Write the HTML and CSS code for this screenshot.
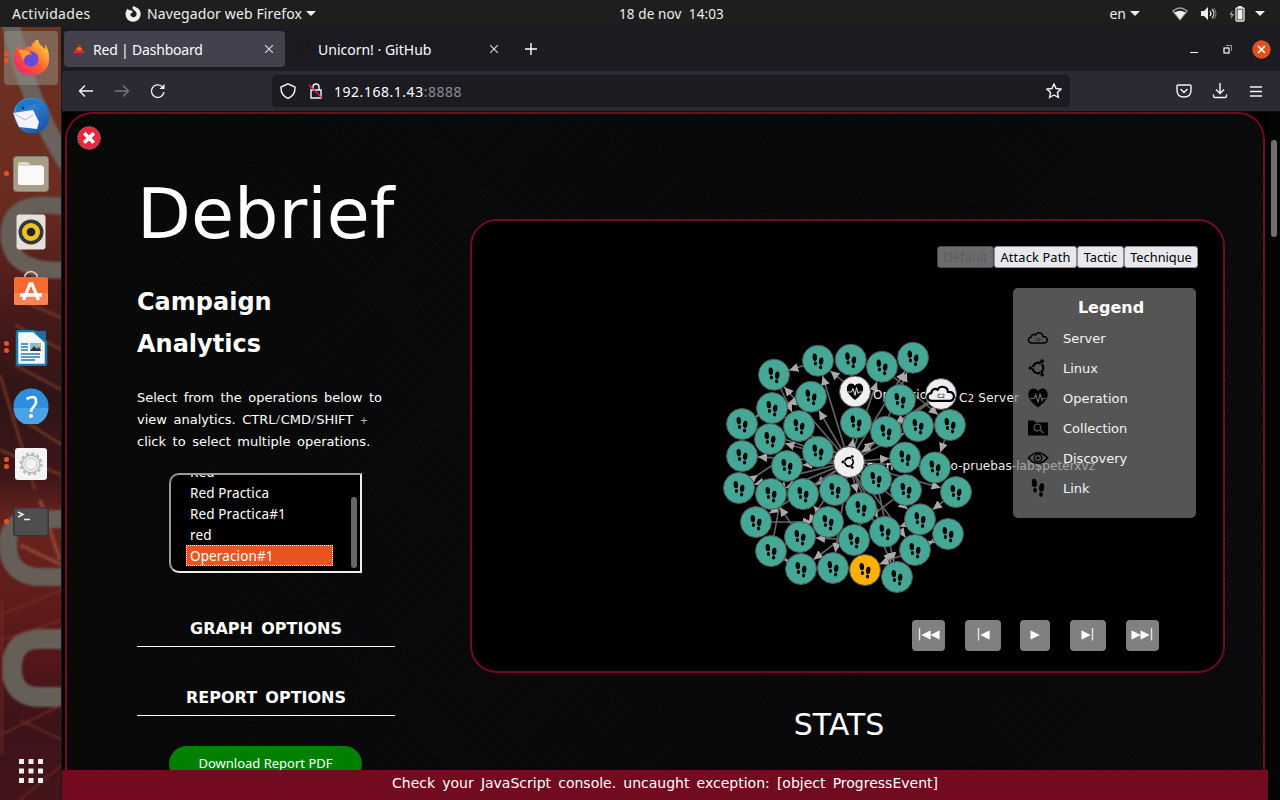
FILE: index.html
```html
<!DOCTYPE html>
<html lang="es">
<head>
<meta charset="utf-8">
<title>Red | Dashboard</title>
<link rel="stylesheet" href="styles.css">
</head>
<body>
<svg class="defs" aria-hidden="true">
  <defs>
    <g id="feet">
      <ellipse cx="-3.2" cy="-3.4" rx="2.2" ry="3.7" transform="rotate(-5 -3.2 -3.4)"/>
      <ellipse cx="-2.6" cy="2.9" rx="1.6" ry="2"/>
      <ellipse cx="3.2" cy="0.4" rx="2.2" ry="3.7" transform="rotate(8 3.2 .4)"/>
      <ellipse cx="2.6" cy="6.6" rx="1.6" ry="2"/>
    </g>
    <g id="linux">
      <circle r="4.400" fill="none" stroke="#000" stroke-width="1.900" stroke-dasharray="8.215 1" stroke-dashoffset="-.5" transform="rotate(60)"/>
      <circle cx="-6.400" cy="0" r="1.500"/><circle cx="3.400" cy="-5.700" r="1.500"/><circle cx="3.400" cy="5.700" r="1.500"/>
    </g>
    <g id="heart">
      <path d="M0 8.600C-4 5-8.200 1.400-8.200-3c0-5.600 6-6.700 8.200-2.800C2.200-9.700 8.200-8.600 8.200-3 8.200 1.400 4 5 0 8.600z"/>
      <path class="pulse" d="M-7 .5h3.500l1.500-3.500 2 7 1.500-8 1.700 6 1-1.500h3"/>
    </g>
    <g id="cloud">
      <path d="M-8 6C-12.500 6-13-.500-8.500-.800-8-5-4-4.800-3-3.800-.500-8 6-6.500 6-1.800c7-.300 6.500 7.800 1.500 7.800z" fill="none" stroke="#000" stroke-width="1.900"/>
      <text y="3.500" class="cloud-text">C2</text>
    </g>
    <g id="node"><circle r="15.500" class="teal"/><use href="#feet"/></g>
    <marker id="arrow" markerUnits="userSpaceOnUse" markerWidth="10" markerHeight="10" refX="25" refY="4.500" orient="auto"><path d="M0 0 9 4.500 0 9z" fill="#aaa"/></marker>
    <linearGradient id="fox" x1="0" y1="1" x2="1" y2="0"><stop stop-color="#e8157c"/><stop offset=".5" stop-color="#ff6030"/><stop offset="1" stop-color="#fff044"/></linearGradient>
    <linearGradient id="bird" x1="0" y1="0" x2="1" y2="1"><stop stop-color="#39a5e8"/><stop offset="1" stop-color="#1747a5"/></linearGradient>
    <linearGradient id="wall" x1="0" y1="0" x2="0" y2="1"><stop stop-color="#6b3322"/><stop offset=".22" stop-color="#6b2c20"/><stop offset=".36" stop-color="#4a1a1a"/><stop offset=".48" stop-color="#2f1517"/><stop offset=".58" stop-color="#3e1619"/><stop offset=".64" stop-color="#6a241c"/><stop offset=".8" stop-color="#591719"/><stop offset=".9" stop-color="#3c1319"/><stop offset="1" stop-color="#44141a"/></linearGradient>
    <filter id="soft"><feGaussianBlur stdDeviation="1"/></filter>
  </defs>
</svg>

<header class="topbar">
  <span class="activities">Actividades</span>
  <svg class="app-icon" viewBox="0 0 16 16"><path d="M8 0c3 1 8 3 7.700 8.300A7.600 7.600 0 0 1 .5 8C.4 5.500 1.500 4 2.800 2.400c.3 1.200 1 1.600 2.400 1.900C7 4 8 5 7.500 6.500 6 7 5 8 5.500 9.500A3.300 3.300 0 1 0 10 5C8.500 3.500 6.800 2.600 8 0z" fill="#eee"/></svg>
  <span class="app-name">Navegador web Firefox</span><i class="caret"></i>
  <span class="clock">18 de nov&nbsp; 14:03</span>
  <div class="status">
    <span>en</span><i class="caret lang"></i>
    <svg class="wifi" viewBox="0 0 16 14"><path d="M1 4Q8-2 15 4L8 12.500z" fill="none" stroke="#999" stroke-width="1.500"/><path d="M2.500 5.500Q8 2 13.500 5.500L8 12.500z" fill="#eee"/></svg>
    <svg class="volume" viewBox="0 0 16 14"><path d="M0 4h3l4-4v13L3 9H0z" fill="#eee"/><path d="M9 4q2 2.500 0 5M11 2q4 4.500 0 9" fill="none" stroke="#ddd" stroke-width="1.200"/><path d="M13 1q4 5.500 0 11" fill="none" stroke="#888"/></svg>
    <svg class="battery" viewBox="0 0 16 16"><path d="M3.500 4 .5 9h2L1.500 13l4-5H3z" fill="#999"/><rect x="7" y="2" width="8" height="13" rx="1" fill="none" stroke="#eee" stroke-width="1.300"/><path d="M9 0h4v2H9zM8.500 3.500h5v10h-5z" fill="#eee"/></svg>
    <i class="caret"></i>
  </div>
</header>

<div class="workspace">
  <nav class="dock">
    <svg class="wallpaper" viewBox="0 27 62 773" preserveAspectRatio="none">
      <rect y="27" width="62" height="773" fill="url(#wall)"/>
      <g filter="url(#soft)">
        <path d="M10 20Q26 100 70 168" fill="none" stroke="#6b625b" stroke-width="18"/>
        <path d="M66 207Q9 197 9 235T66 270" fill="none" stroke="#655f58" stroke-width="17"/>
        <path d="M0 375 35 490M20 300 62 318M15 325 62 350M15 365 62 390M15 415 62 445M0 450 62 475" stroke="#77382a" stroke-opacity=".75" stroke-width="3" fill="none"/>
        <path d="M40 500 60 560M20 545 62 565" stroke="#8a4030" stroke-width="4"/>
        <path d="M66 519H38Q8 517 8 545T36 577H66" fill="none" stroke="#655f58" stroke-width="18"/>
        <path d="M66 639H40Q12 639 12 668T40 697H66" fill="none" stroke="#655f58" stroke-width="20"/>
        <path d="M0 615 62 590M0 640 62 620M0 735 62 705M20 720 62 740M20 800 62 765M2 600V755" stroke="#782d27" stroke-opacity=".7" stroke-width="2" fill="none"/>
      </g>
    </svg>
    <div class="app active"><i class="dots two"></i><svg viewBox="-18 -18 36 36"><path d="M-17-3C-16-8-14-11-12-12-11-9-9-8-6-9-4-12-2-12 0-11 1-15 4-17 7-19 7-14 12-11 14-9 15-11 14-12 14-14 22-1 19 17 1 17.500-11 18-19 8-17-3z" fill="url(#fox)"/><circle cx="0" cy="1" r="7.500" fill="#6b48d6"/><path d="M-13-8Q-2-9 1-3-5-5-8 3-9-2-13-8z" fill="#ff982e"/></svg></div>
    <div class="app"><svg viewBox="-18 -18 36 36"><path d="M-17-2C-18-12-8-19 1-18 13-18 20-8 18.500 1 18 10 11 18 2 17.500-8 18-16 10-17-2z" fill="url(#bird)"/><path d="M-14-12Q-2-21 11-13 1-14-5-7L-15-4z" fill="#2277c8"/><circle cx="-8" cy="-8" r="1.200" fill="#222"/><path d="M-18-3 2-6 8 6 6 13-12 11z" fill="#f5f5f9"/><path d="m-18-3 12 7L2-1" fill="none" stroke="#aeb8c8"/></svg></div>
    <div class="app"><i class="dots"></i><svg viewBox="0 0 36 36"><rect x=".5" y=".5" width="35" height="35" rx="3" fill="#a69e89" stroke="#827d70"/><path d="M5 8q0-2 2-2h8l2 3h12v6H5z" fill="#dcd8ce"/><rect x="5" y="10" width="26" height="19" rx="2" fill="#faf9f7"/></svg></div>
    <div class="app"><svg viewBox="0 0 36 36"><rect x="3.500" y=".5" width="29" height="35" rx="3" fill="#e5e0d9"/><circle cx="18" cy="18" r="12.500" fill="#33353f"/><circle cx="18" cy="18" r="9" fill="#eec31c"/><circle cx="18" cy="18" r="4.300" fill="#202026"/></svg></div>
    <div class="app"><svg class="store" viewBox="0 2 36 36"><path d="M12 9V5q6-7 12 0v4" fill="none" stroke="#e4cfaa" stroke-width="1.500"/><rect x="1" y="7" width="34" height="28" rx="2" fill="#f36b31"/><path d="M1 23h34v10q0 2-2 2H3q-2 0-2-2z" fill="#fa8354"/><path d="m10.500 30 6.500-16h2l6.500 16M7 25h22" fill="none" stroke="#fff" stroke-width="3.300"/></svg></div>
    <div class="app"><i class="dots two"></i><svg viewBox="0 0 36 36"><path d="M6 1h15l12 11v21q0 2-2 2H6q-2 0-2-2V3q0-2 2-2z" fill="#f7f7f7" stroke="#1679ab" stroke-width="2.500"/><path d="M22 1h11v10z" fill="#1b70a0"/><path d="M8 14h7M8 17h7M8 20h7M8 24h19M8 27h19M8 30h14" stroke="#257ca9" stroke-width="1.500"/><path d="M17 13h11v8H17z" fill="#83bce2"/><path d="m17 21 4-5 3 3 2-2 2 4z" fill="#333"/><circle cx="26" cy="15" r="1.300" fill="#edbd26"/></svg></div>
    <div class="app"><svg viewBox="0 0 36 36"><circle cx="18" cy="18" r="17.500" fill="#2d8fdd"/><path d="M.5 20h35a17.500 17.500 0 0 1-35 0z" fill="#4ba2e5"/><path d="M13.500 11q10-5 9.500 3c0 5-5 4.500-5 10" fill="none" stroke="#fff" stroke-width="2.600"/><circle cx="18" cy="28" r="2" fill="#fff"/></svg></div>
    <div class="app"><i class="dots two"></i><svg viewBox="0 0 36 36"><rect x="2" y="2" width="32" height="32" rx="3" fill="#f3f3f3"/><circle cx="18" cy="18" r="10.500" fill="none" stroke="#b6b6b6" stroke-width="2" stroke-dasharray="3 2.500"/><circle cx="18" cy="18" r="8.800" fill="none" stroke="#b6b6b6" stroke-width="1.400"/><circle cx="18" cy="18" r="6" fill="none" stroke="#c0c0c0"/></svg></div>
    <div class="app"><i class="dots"></i><svg viewBox="0 0 36 36"><rect x=".8" y="3.800" width="34.400" height="28" rx="2.500" fill="#4e4e4e" stroke="#373737" stroke-width="1.600"/><path d="m5 8 5 2.500L5 13M11 15.500h6" fill="none" stroke="#eee" stroke-width="1.500"/></svg></div>
    <svg class="launcher" viewBox="0 0 24 24"><path d="M0 2.500h24M0 12h24M0 21.500h24" stroke="#eee" stroke-width="5" stroke-dasharray="5 4.500"/></svg>
  </nav>

  <main class="browser">
    <div class="tabs">
      <div class="tab selected"><svg class="favicon" viewBox="0 0 14 14"><path d="M1 12 5.500 6h3L13 12z" fill="#d63217"/><path d="m5 8 1-2.500h2L10 8 8 10 6.500 9 5 10z" fill="#e6751a"/><path d="M4 4q3-3 6 0L8 6H6z" fill="#69451d"/></svg><span class="tab-red">Red | Dashboard</span><svg class="close" viewBox="0 0 8 8"><path d="m0 0 8 8M8 0 0 8"/></svg></div>
      <div class="tab"><svg class="favicon" viewBox="0 0 14 14"><path d="M2 4V2h3M9 2h3v4M2 8v2h3M9 10h2" fill="none" stroke="#111114" stroke-width="1"/></svg><span class="tab-uni">Unicorn! · GitHub</span><svg class="close" viewBox="0 0 8 8"><path d="m0 0 8 8M8 0 0 8"/></svg></div>
      <svg class="plus" viewBox="0 0 12 12"><path d="M6 0v12M0 6h12" stroke="#fff" stroke-width="1.400"/></svg>
      <div class="window-buttons">
        <svg width="8" height="8"><path d="M0 7.500h8" stroke="#fff"/></svg>
        <svg width="9" height="9"><path d="M3 .5h5.500V6" fill="none" stroke="#999"/><rect x="1" y="3" width="5" height="5" fill="none" stroke="#fff" stroke-width="1.200"/></svg>
        <svg width="19" height="19"><circle cx="9.500" cy="9.500" r="9.200" fill="#e2501b"/><path d="m6 6 7 7m0-7-7 7" stroke="#fff" stroke-width="1.600"/></svg>
      </div>
    </div>

    <div class="toolbar">
      <svg class="back" viewBox="0 0 16 14"><path d="M15 7H1.500m5.500-5.500L1.500 7 7 12.500"/></svg>
      <svg class="forward" viewBox="0 0 16 14"><path d="M1 7h13.500M9 1.500 14.500 7 9 12.500"/></svg>
      <svg class="reload" viewBox="0 0 16 16"><path d="M14 9a6.300 6.300 0 1 1-2-5.500"/><path d="M14.500 1v5h-5z" class="solid"/></svg>
      <div class="address">
        <svg class="shield" viewBox="0 0 16 16"><path d="M8 .8 15 4Q15.500 12 8 15.500.5 12 1 4z"/></svg>
        <svg class="lock" viewBox="0 0 16 16"><path d="M3 7h10v8H3zM5 7V4Q5 1 8 1t3 3v3"/><path d="m1 2 13 13" class="slash"/></svg>
        <span class="host">192.168.1.43<em>:8888</em></span>
        <svg class="star" viewBox="0 0 16 16"><path d="m8 1 2.100 4.500 5 .600-3.700 3.400 1 5L8 12l-4.400 2.500 1-5L.9 6.100l5-.6z"/></svg>
      </div>
      <svg class="pocket" viewBox="0 0 16 14"><path d="M2 1h12q1 0 1 1v4Q15 13 8 13T1 6V2q0-1 1-1zM4.500 5 8 8.500 11.500 5"/></svg>
      <svg class="download" viewBox="0 0 16 16"><path d="M8 0v10M4 6.500l4 4 4-4M1.500 11.500V13q0 1.500 1.500 1.500h10q1.500 0 1.500-1.500v-1.500"/></svg>
      <svg class="menu" viewBox="0 0 12 11"><path d="M0 1h12M0 5.500h12M0 10h12"/></svg>
    </div>

    <div class="viewport">
      <div class="page">
        <section class="debrief">
          <svg class="close-badge" viewBox="0 0 24 24"><circle cx="12" cy="12" r="11.300" fill="#e8273f" stroke="#ad8e92" stroke-width=".8" stroke-dasharray="2 1"/><path d="m7.200 7.200 9.600 9.600m0-9.600-9.600 9.600" stroke="#fff" stroke-width="3.600"/></svg>
          <div class="sidebar">
            <h1>Debrief</h1>
            <h2>Campaign<br>Analytics</h2>
            <p>Select from the operations below to<br>view analytics. CTRL<b>/</b>CMD<b>/</b>SHIFT <small>+</small><br>click to select multiple operations.</p>
            <div class="select">
              <div class="options"><div>Red</div><div>Red Practica</div><div>Red Practica#1</div><div>red</div><div class="chosen">Operacion#1</div></div>
              <div class="thumb"></div>
            </div>
            <h3>GRAPH OPTIONS</h3>
            <h3 class="report">REPORT OPTIONS</h3>
            <button class="pdf">Download Report PDF</button>
          </div>
          <div class="results">
            <div class="graph">
              <svg class="network" viewBox="472 221 751 450">
                <g class="links">
                  <path d="M818 361 774 375"/><path d="M849 462 774 375"/><path d="M849 462 772 408"/><path d="M849 462 811 397"/><path d="M849 462 818 361"/><path d="M855 391 818 361"/>
                  <path d="M849 462 882 367"/><path d="M849 462 913 358"/><path d="M882 367 850 360"/><path d="M855 391 850 360"/><path d="M882 432 913 358"/><path d="M849 462 886 432"/><path d="M849 462 856 423"/>
                  <path d="M941 394 849 462"/><path d="M882 367 950 425"/><path d="M941 394 882 432"/><path d="M950 425 935 467"/><path d="M849 462 918 426"/><path d="M849 462 905 457"/>
                  <path d="M849 462 742 456"/><path d="M849 462 742 424"/><path d="M849 462 770 439"/><path d="M772 408 742 424"/><path d="M774 375 799 426"/><path d="M811 397 772 408"/>
                  <path d="M849 462 771 494"/><path d="M849 462 787 466"/><path d="M849 462 803 494"/><path d="M849 462 739 488"/><path d="M849 462 956 492"/><path d="M849 462 935 467"/>
                  <path d="M956 492 920 519"/><path d="M849 462 920 519"/><path d="M849 462 861 508"/><path d="M849 462 800 537"/><path d="M849 462 756 522"/><path d="M756 522 828 522"/>
                  <path d="M771 551 787 466"/><path d="M906 490 801 569"/><path d="M849 462 833 568"/><path d="M876 479 897 577"/><path d="M849 462 897 577"/><path d="M849 462 915 550"/>
                  <path d="M800 537 771 494"/><path d="M854 540 800 537"/><path d="M948 534 915 550"/><path d="M915 550 865 570"/><path d="M771 551 801 569"/><path d="M801 569 771 551"/>
                  <path d="M771 551 800 537"/><path d="M920 519 885 532"/><path d="M915 550 948 534"/><path d="M906 490 876 479"/><path d="M739 488 771 466"/><path d="M828 522 803 494"/><path d="M849 462 885 532"/>
                </g>
                <g transform="translate(855 391.500)"><circle r="15.500" class="white"/><use href="#heart"/></g>
                <text x="873" y="399">Operacion#1</text>
                <g transform="translate(941 394)"><circle r="15.500" class="white"/><use href="#cloud" transform="scale(1.150)"/></g>
                <g transform="translate(849 462)"><circle r="15.500" class="white"/><use href="#linux" transform="scale(.95)"/></g>
                <text x="959" y="402" textLength="60">C<tspan font-size="10">2</tspan> Server</text>
                <text x="867" y="470">s</text><text x="886" y="470">m</text>
                <text x="950.500" y="470" textLength="144.500">o-pruebas-lab$peterxvz</text>
                <use href="#node" x="774" y="374.700"/><use href="#node" x="818" y="360.700"/><use href="#node" x="850.700" y="359.700"/><use href="#node" x="882" y="366.700"/><use href="#node" x="913" y="357.700"/>
                <use href="#node" x="811" y="396.700"/><use href="#node" x="772" y="408"/><use href="#node" x="900" y="400"/><use href="#node" x="742" y="424"/><use href="#node" x="799" y="426"/>
                <use href="#node" x="856" y="422.700"/><use href="#node" x="886" y="431.700"/><use href="#node" x="918" y="426"/><use href="#node" x="950" y="425"/><use href="#node" x="770" y="439"/>
                <use href="#node" x="742" y="456"/><use href="#node" x="818" y="451.700"/><use href="#node" x="905" y="457.500"/><use href="#node" x="787" y="466"/><use href="#node" x="935" y="467.500"/>
                <use href="#node" x="876" y="479"/><use href="#node" x="739" y="488"/><use href="#node" x="771" y="494"/><use href="#node" x="803" y="494"/><use href="#node" x="835" y="490"/>
                <use href="#node" x="906" y="490"/><use href="#node" x="956" y="492"/><use href="#node" x="861" y="508"/><use href="#node" x="756" y="522"/><use href="#node" x="828" y="522"/>
                <use href="#node" x="920" y="519.300"/><use href="#node" x="948" y="534"/><use href="#node" x="800" y="537"/><use href="#node" x="885" y="531.700"/><use href="#node" x="854" y="540"/>
                <use href="#node" x="771" y="551"/><use href="#node" x="915" y="550"/><use href="#node" x="801" y="569"/><use href="#node" x="833" y="568"/><use href="#node" x="897" y="577"/>
                <g transform="translate(865 570)"><circle r="15.500" class="amber"/><use href="#feet"/></g>
              </svg>
              <div class="modes"><button class="m1" disabled>Default</button><button class="m2">Attack Path</button><button class="m3">Tactic</button><button class="m4">Technique</button></div>
              <div class="legend">
                <h4>Legend</h4>
                <div class="row"><svg viewBox="-14 -12 28 24"><g transform="scale(.82)"><use href="#cloud"/></g></svg>Server</div>
                <div class="row"><svg viewBox="-14 -12 28 24"><use href="#linux" transform="scale(1.200)"/></svg>Linux</div>
                <div class="row heart-row"><svg viewBox="-14 -12 28 24"><path d="M0 9.500C-5 5.500-9.700 1.500-9.700-3.500c0-6.500 7-8 9.700-3.300C2.700-11.500 9.700-10 9.700-3.500 9.700 1.500 5 5.500 0 9.500z"/><path class="faint" d="M-8 .5h4l1.800-4 2.400 8L2-4.500l2 7L5.200.5H8"/></svg>Operation</div>
                <div class="row"><svg viewBox="-14 -12 28 24"><path d="M-10-7.500h6l2 2h12v13h-20z"/><circle cx="-.5" cy="-.5" r="3.300" fill="none" stroke="#555" stroke-width="1.300"/><path d="m2 2 3.500 3" stroke="#555" stroke-width="1.500"/></svg>Collection</div>
                <div class="row"><svg viewBox="-14 -12 28 24"><path d="M-9.500 0Q0-10.500 9.500 0 0 10.500-9.500 0z" fill="none" stroke="#000" stroke-width="1.600"/><circle r="3.700" fill="none" stroke="#000" stroke-width="1.400"/><circle r="1.600"/></svg>Discovery</div>
                <div class="row"><svg viewBox="-14 -12 28 24"><use href="#feet" transform="translate(0 -1) scale(1.150)"/></svg>Link</div>
              </div>
              <div class="playback"><button class="wide3">|◀◀</button><button class="wide2">|◀</button><button class="wide1">▶</button><button class="wide2">▶|</button><button class="wide3">▶▶|</button></div>
            </div>
            <h2 class="stats">STATS</h2>
          </div>
        </section>
        <footer class="error">Check your JavaScript console. uncaught exception: [object ProgressEvent]</footer>
      </div>
      <div class="scrollbar"><div class="scroll-thumb"></div></div>
    </div>
  </main>
</div>
</body>
</html>
```

FILE: styles.css
```css
* { box-sizing: border-box; }
body { margin: 0; width: 1280px; height: 800px; overflow: hidden; display: flex; flex-direction: column; background: #000; color: #fff; font-family: "Noto Sans", sans-serif; font-size: 14px; }
h1, h2, h3, h4, p { margin: 0; }
button { font-family: "Noto Sans", sans-serif; padding: 0; margin: 0; white-space: nowrap; }
svg { display: block; flex: none; }
.defs { position: absolute; width: 0; height: 0; }

.topbar { height: 27px; flex: none; display: flex; align-items: center; position: relative; background: #1e1e1e; padding-left: 12px; color: #eee; white-space: nowrap; }
.activities { width: 113px; letter-spacing: .35px; }
.app-icon { width: 16px; height: 16px; }
.app-name { margin-left: 6px; width: 155px; letter-spacing: .13px; }
.caret { margin-left: 4px; border: 5px solid transparent; border-top-color: #eee; border-bottom: 0; }
.clock { margin-left: 303px; font-size: 13.5px; letter-spacing: .12px; width: 108px; }
.status { margin-left: auto; display: flex; align-items: center; padding-right: 15px; }
.status span { padding-left: 1px; }
.lang { margin-right: 32px; }
.wifi { width: 16px; height: 14px; margin-right: 13px; }
.volume { width: 16px; height: 14px; margin-right: 12px; }
.battery { width: 16px; height: 16px; margin-right: 6px; }

.workspace { flex: 1; min-height: 0; display: flex; }
.dock { width: 62px; position: relative; display: flex; flex-direction: column; gap: 4px; padding: 4px 4px 17px; border-right: 1px solid #181818; overflow: hidden; }
.wallpaper { position: absolute; left: 0; top: 0; width: 62px; height: 773px; }
.app { position: relative; width: 54px; height: 54px; display: flex; align-items: center; justify-content: center; }
.app svg { width: 36px; height: 36px; }
.app .store { overflow: visible; }
.active { background: rgba(150,150,140,.5); border-radius: 4px; }
.dots { position: absolute; left: 0; top: 24px; width: 5px; height: 5px; border-radius: 50%; background: #e95420; }
.two { top: 20px; box-shadow: 0 7px 0 #e95420; }
.launcher { position: relative; width: 24px; height: 24px; margin: auto 0 0 15px; }

.browser { width: 1218px; display: flex; flex-direction: column; min-height: 0; }
.tabs { height: 44px; flex: none; background: #1c1b22; display: flex; align-items: center; padding: 0 9px 0 2px; }
.tab { width: 221px; height: 36px; border-radius: 4px; display: flex; align-items: center; padding: 0 12px 0 8px; margin-right: 4px; color: #fbfbfe; }
.selected { background: #42414d; }
.favicon { width: 14px; height: 14px; margin-right: 7px; }
.tab-red { letter-spacing: -.2px; }
.tab-uni { letter-spacing: 0; }
.tab .favicon { position: relative; top: -1px; }
.close { width: 8px; height: 8px; margin-left: auto; stroke: #ddd; stroke-width: 1.1; }
.plus { width: 12px; height: 12px; margin-left: 11px; }
.window-buttons { margin-left: auto; display: flex; gap: 25px; align-items: center; }
.window-buttons svg:last-child { margin-left: -5px; }

.toolbar { height: 40px; flex: none; background: #2b2a33; display: flex; align-items: center; padding: 0 18px 0 16px; }
.toolbar svg { fill: none; stroke: #f5f5f8; stroke-width: 1.4; width: 16px; height: 16px; }
.toolbar .back, .toolbar .forward { height: 14px; }
.toolbar .forward { margin-left: 20px; stroke: #77757f; }
.reload { margin-left: 20px; }
.solid { fill: #f5f5f8; stroke: none; }
.address { width: 798px; height: 32px; margin-left: 106px; border-radius: 4px; background: #1c1b22; display: flex; align-items: center; padding: 0 8px; }
.toolbar .lock { margin-left: 12px; }
.toolbar .slash { stroke: #ff194b; }
.host { margin-left: 10px; letter-spacing: .53px; }
.host em { font-style: normal; color: #8c8b94; }
.star { margin-left: auto; }
.toolbar .pocket { margin-left: 106px; height: 14px; }
.download { margin-left: 20px; }
.toolbar .menu { margin-left: auto; width: 12px; height: 11px; }

.viewport { flex: 1; min-height: 0; display: flex; border-top: 1px solid #111; }
.page { width: 1206px; display: flex; flex-direction: column; }
.debrief { flex: 1; min-height: 0; overflow: hidden; position: relative; display: flex; margin: 0 3px; padding-left: 70px; border: 2px solid #730b20; border-bottom: 0; border-radius: 27px 27px 0 0; background-color: #070709; background-image: repeating-linear-gradient(45deg, rgba(255,255,255,.01) 0 1px, transparent 1px 4px), repeating-linear-gradient(-45deg, rgba(255,255,255,.01) 0 1px, transparent 1px 4px), linear-gradient(90deg, #070707, #08080a, #070709, #09090b); }
.close-badge { position: absolute; left: 10px; top: 12px; width: 24px; height: 24px; }
.sidebar { width: 258px; flex: none; padding-top: 58px; font-family: "DejaVu Sans", sans-serif; display: flex; flex-direction: column; }
.sidebar > * { flex: none; }
h1 { font-size: 70px; font-weight: 400; line-height: 84px; letter-spacing: 0; white-space: nowrap; }
.sidebar h2 { font-size: 24px; line-height: 42px; margin-top: 25px; }
.sidebar p { font-size: 13px; line-height: 22px; word-spacing: 2.4px; margin-top: 22px; white-space: nowrap; height: 66px; }
.sidebar p b { font-weight: 400; color: #bbb; font-family: "Noto Sans", sans-serif; line-height: 0; letter-spacing: .3px; }
.sidebar p small { font-size: 10px; color: #bbb; line-height: 0; }
.select { width: 193px; height: 100px; margin: 20px 0 0 32px; background: #000; border: 2px solid; border-color: #999 #eee #eee #999; border-radius: 10px 0 0 10px; display: flex; justify-content: space-between; overflow: hidden; }
.options { width: 147px; margin: -14px 0 0 15px; font-family: "Noto Sans", sans-serif; font-size: 13.5px; line-height: 21px; letter-spacing: .12px; }
.options div { height: 21px; padding: 1px 0 0 4px; }
.options .chosen { background: #e95420; outline: 1px dotted #fff; outline-offset: -1px; }
.thumb { width: 6px; height: 71px; margin: 22px 3px 0 0; background: #666; border-radius: 3px; }
h3 { font-size: 16px; line-height: 24px; text-align: center; word-spacing: 2.7px; padding-bottom: 5px; border-bottom: 1px solid #fff; margin-top: 44px; }
h3.report { margin-top: 39px; }
.pdf { width: 193px; height: 36px; flex: none; margin: 30px 0 0 32px; padding-bottom: 2px; border: 0; border-radius: 18px; background: #008000; color: #fff; font-size: 13px; }

.results { width: 755px; flex: none; margin: 105px 0 0 75px; }
.graph { position: relative; height: 454px; border: 2px solid #730b20; border-radius: 27px; background: #000; display: flex; flex-direction: column; align-items: flex-end; padding-top: 25px; overflow: hidden; }
.network { position: absolute; inset: 0; width: 751px; height: 450px; }
.network text { font-family: "DejaVu Sans", sans-serif; font-size: 12px; fill: #eee; }
.links { stroke: #666; stroke-width: 1.6; fill: none; }
.links path { marker-end: url(#arrow); }
.teal { fill: #45a897; stroke: #555; }
.white { fill: #efefef; stroke: #555; }
.amber { fill: #ffb000; stroke: #555; }
.pulse { fill: none; stroke: #ddd; stroke-width: 1; }
.faint { fill: none; stroke: #666; stroke-width: 1.2; }
.network .cloud-text, .cloud-text { font: 5px "DejaVu Sans", sans-serif; text-anchor: middle; fill: #000; }
.modes { position: relative; display: flex; margin-right: 25px; }
.modes button { height: 22px; border: 1px solid #8f8f9d; border-radius: 3px; background: #e9e9ed; color: #000; font-size: 12.8px; }
.modes .m1 { width: 57px; background: #6c6c6e; border-color: #484850; color: #5b5b5e; }
.modes .m2 { width: 83px; letter-spacing: .15px; } .m3 { width: 47px; } .m4 { width: 74px; }
.legend { position: relative; width: 183px; height: 230px; margin: 20px 27px 0 0; padding: 4px 0 0 11px; border-radius: 5px; background: rgba(128,128,128,.664); font: 13px "DejaVu Sans", sans-serif; color: #f4f4f4; }
.legend h4 { font-size: 16px; line-height: 31px; padding-left: 2px; text-align: center; color: #fff; }
.row { height: 30px; display: flex; align-items: center; }
.row svg { width: 28px; height: 24px; margin-right: 11px; }
.playback { position: relative; display: flex; gap: 20px; margin: 102px 64px 0 0; }
.playback button { height: 31px; border: 0; border-radius: 4px; background: #808080; color: #fff; font: 11.7px "DejaVu Sans", sans-serif; padding-bottom: 3px; }
.wide3 { width: 33px; } .wide2 { width: 36px; } .wide1 { width: 30px; }
.playback .wide1 { margin-left: -1px; }
.stats { margin-top: 34px; padding-right: 17px; text-align: center; font: 400 30px/36px "DejaVu Sans", sans-serif; }
.error { height: 30px; flex: none; background: #730b20; text-align: center; font: 14px/26px "DejaVu Sans", sans-serif; word-spacing: 2.7px; white-space: nowrap; }
.scrollbar { width: 12px; background: #050506; padding: 28px 3px 0; }
.scroll-thumb { width: 6px; height: 97px; border-radius: 3px; background: #707070; }
```
